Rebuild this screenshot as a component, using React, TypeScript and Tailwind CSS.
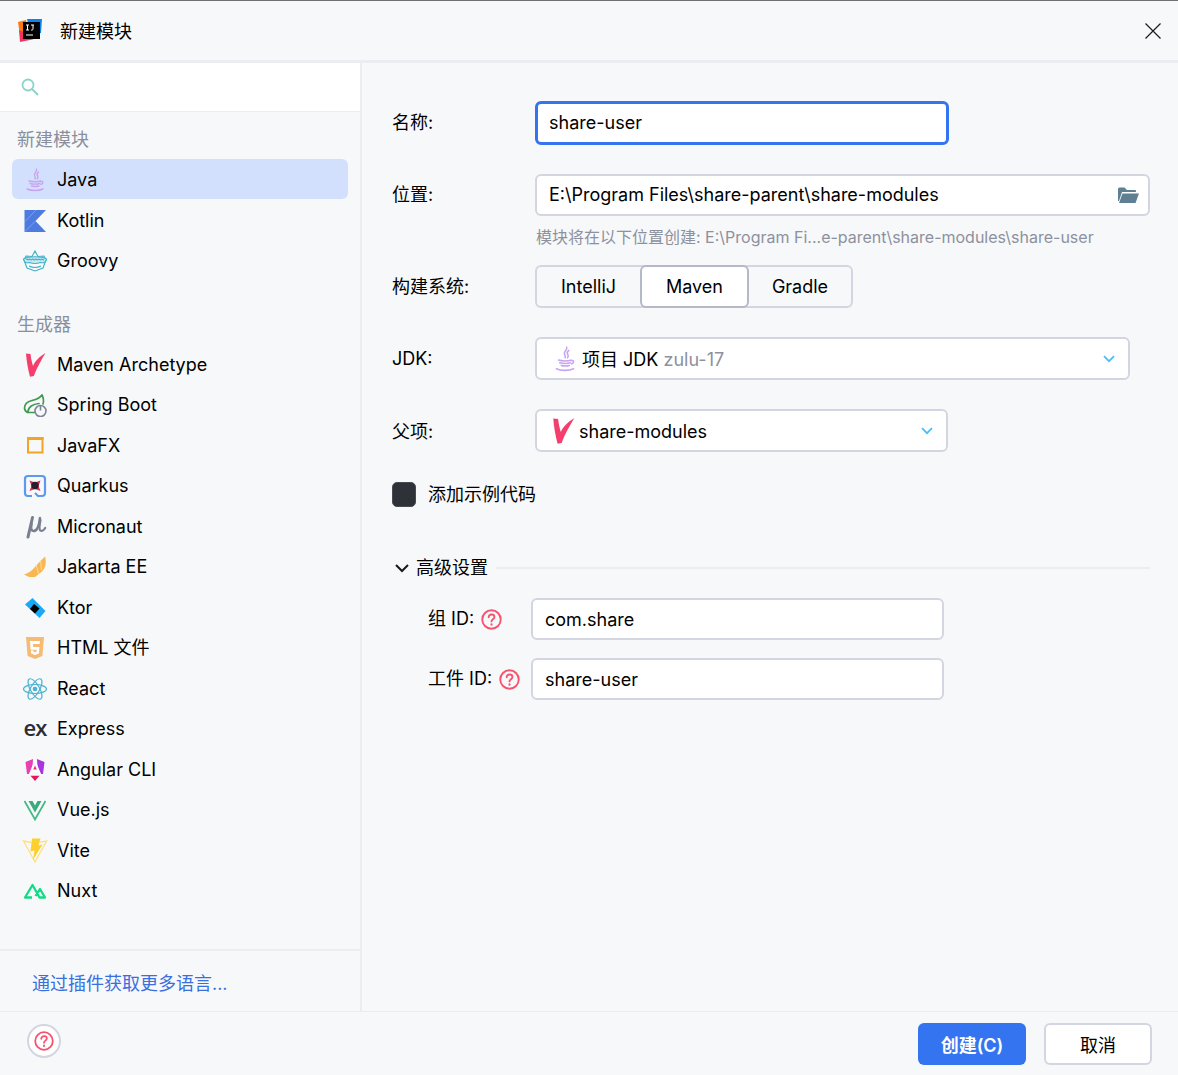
import type {ReactNode} from 'react'

const JavaIcon = ({size = 24}: {size?: number}) => (
  <svg width={size} height={size} viewBox="0 0 24 24" fill="none" stroke="#c9a2f2" strokeWidth="1.4" strokeLinecap="round">
    <path d="M13.500 1c1.500 2.500-3.500 4-1.800 7 .6 1 1 1.800.4 3" />
    <path d="M15.500 4c-2 1.500-1.600 3-.8 4.200.5.8.3 1.800-.4 2.600" />
    <path d="M6 13c3 1 9 1 11.500 0M7 15.500c3 .8 7 .8 10 0M8.500 18c2.500.6 5 .6 7.500 0" />
    <path d="M17.500 13.500c2.500-.8 3.500 1.800.5 3" />
    <path d="M4 21c4 2 12 2 16 0" />
  </svg>
)

const MavenIcon = ({size = 24}: {size?: number}) => (
  <svg width={size} height={size} viewBox="0 0 24 24">
    <path d="M3 .5L7.500 1C8 6 9 9.500 10 13 12 8 16 4 22.500 0 19 6 14 14 10.800 23L7 23.800C5 16 3.500 8 3 .5z" fill="#f43f6e" />
  </svg>
)

const KotlinIcon = () => (
  <svg width="24" height="24" viewBox="0 0 24 24">
    <path d="M1.500 1h21.500L12.500 12 23 23H1.500z" fill="#4d7be0" />
    <path d="M1.500 13L13 1M1.500 23l11-11" stroke="#9db8ee" strokeWidth="0.6" />
  </svg>
)

const GroovyIcon = () => (
  <svg width="26" height="24" viewBox="0 0 26 24" fill="none" stroke="#3fb0c6" strokeWidth="1.100">
    <path d="M13 2l3 5.500 6-.5 2 4-3 8-8 3-8-3-3-8 2-4 6 .5z" />
    <path d="M1.500 10c5-3 18-3 23 0-1 4-3 4-6 3.500-4 1.500-7 1.500-11 0-3 .5-5 .5-6-3.500z" fill="#c6e9f0" />
    <path d="M4 10.500c1-1.500 2 1.500 3 0s2 1.500 3 0 2 1.500 3 0 2 1.500 3 0 2 1.500 3 0 2 1.500 3 0" strokeWidth="1.200" />
    <path d="M7 17c4 2 8 2 12 0" />
  </svg>
)

const SpringIcon = () => (
  <svg width="24" height="24" viewBox="0 0 24 24" fill="none">
    <path d="M19 2c-2 3-6 4.500-10 5.500C5 8.500 1.500 11 1.500 15c0 2 1.200 3.500 3 4.500h8M5 19c0-5 5-8 11-8.500M19 2c1.500 3 2 6 1 9" stroke="#3d9a50" strokeWidth="1.700" strokeLinecap="round" />
    <circle cx="17.500" cy="18" r="5.500" fill="#f7f8fa" stroke="#7e8493" strokeWidth="1.600" />
    <path d="M17.500 12.500v5" stroke="#7e8493" strokeWidth="1.600" />
  </svg>
)

const JavaFxIcon = () => (
  <svg width="24" height="24" viewBox="0 0 24 24" fill="none">
    <path d="M5 4h14.500v14.500H5z" stroke="#f4a425" strokeWidth="2" />
    <path d="M4 4.500h16.500" stroke="#f4a425" strokeWidth="3" />
  </svg>
)

const QuarkusIcon = () => (
  <svg width="24" height="24" viewBox="0 0 24 24" fill="none">
    <path d="M9 22H5a3 3 0 0 1-3-3V5a3 3 0 0 1 3-3h14a3 3 0 0 1 3 3v14a3 3 0 0 1-3 3h-4l-3-3" stroke="#5a9bf0" strokeWidth="2.200" />
    <path d="M6.500 6.500l5.500 2 5.500-2-2 5.500 2 5-5.500-2-5.500 2 2-5z" fill="#e8265e" />
    <circle cx="12" cy="11.500" r="3.700" fill="#20232a" />
  </svg>
)

const MicronautIcon = () => (
  <svg width="24" height="24" viewBox="0 0 24 24" fill="none" stroke="#7a7f8f" strokeLinecap="round">
    <path d="M9.500 2.500L5 22" strokeWidth="3" />
    <path d="M8.500 9c-1 5 0 7 2 7 3 0 5.500-4 6.500-13" strokeWidth="2.500" />
    <path d="M17.500 5c-1 5-1.800 9-.3 10.500 1.500 1.200 3.500 0 5-2.500" strokeWidth="2.200" />
  </svg>
)

const JakartaIcon = () => (
  <svg width="24" height="24" viewBox="0 0 24 24">
    <path d="M1 19.500c6-1.500 10-6 14-11l7-7c1.500 5 1 11-3 15l-7 5.500-6 0z" fill="#f9b84f" />
    <path d="M13 9.500l2.500 9M17.500 5l1 10" stroke="#fde3b5" strokeWidth="0.800" />
  </svg>
)

const KtorIcon = () => (
  <svg width="24" height="24" viewBox="0 0 24 24">
    <path d="M9.500 2L22.500 15l-6 7L2 8.500z" fill="#1aa9f5" />
    <path d="M11 8l5.500 4.500-4.500 5-5-4.500z" fill="#000" />
  </svg>
)

const HtmlIcon = () => (
  <svg width="24" height="24" viewBox="0 0 24 24">
    <path d="M3 1h18l-1.600 19L12 23l-7.400-3z" fill="#f5bb75" />
    <path d="M7 5h10l-.3 3H10l.2 3h6.300l-.6 6.500L12 19l-3.900-1.500-.2-3h2.600l.1 1.200 1.400.5 1.500-.5.200-2H7.600z" fill="#fff" />
  </svg>
)

const ReactIcon = () => (
  <svg width="26" height="26" viewBox="-13 -13 26 26" fill="none" stroke="#4db2d2" strokeWidth="1.200">
    <ellipse rx="11.500" ry="4.500" />
    <ellipse rx="11.500" ry="4.500" transform="rotate(60)" />
    <ellipse rx="11.500" ry="4.500" transform="rotate(120)" />
    <circle r="2.300" fill="#4db2d2" stroke="none" />
  </svg>
)

const ExpressIcon = () => (
  <span className="w-6 text-center text-[22px] leading-none font-semibold tracking-[-1px] text-[#2c2d33] [font-family:'Open_Sans',sans-serif] -mt-1">ex</span>
)

const AngularIcon = () => (
  <svg width="24" height="24" viewBox="0 0 24 24">
    <path d="M10 1L2.500 4l1.500 12 5 0z" fill="#e83fb5" />
    <path d="M14 1l7.500 3-1.500 12h-5z" fill="#a935e0" />
    <path d="M12 1.500L5.500 17h3l1-2.800h5l1 2.800h3z" fill="#fff" />
    <path d="M12 7.500l1.700 4h-3.400z" fill="#e52a72" />
    <path d="M7.500 17.800h9L12 23z" fill="#e5155f" />
  </svg>
)

const VueIcon = () => (
  <svg width="24" height="24" viewBox="0 0 24 24">
    <path d="M1.500 3L12 21.500 22.500 3" fill="none" stroke="#42b883" strokeWidth="1.700" />
    <path d="M5.500 3h4L12 7.500 14.500 3h4L12 14.500z" fill="#3bab7b" />
  </svg>
)

const ViteIcon = () => (
  <svg width="26" height="26" viewBox="0 0 26 26">
    <path d="M9.500 4.500L1.500 3 13 24 24.500 3l-7 1.200" fill="none" stroke="#fbe27e" strokeWidth="1.300" />
    <path d="M10 .5h8.500l-2 7 4-1L11 22l1.500-9.500-4 1z" fill="#fdd02f" />
  </svg>
)

const NuxtIcon = () => (
  <svg width="24" height="24" viewBox="0 0 24 24" fill="none" stroke="#12dc86" strokeWidth="2.300" strokeLinejoin="round">
    <path d="M9 18.500H2L9.500 6l7 12.500h5.500L17 10l-4.500 7" />
  </svg>
)

const HelpIcon = ({size = 21}: {size?: number}) => (
  <svg width={size} height={size} viewBox="0 0 20 20" fill="none" stroke="#f7536e" strokeWidth="1.800" strokeLinecap="round">
    <circle cx="10" cy="10" r="8.800" />
    <path d="M7.300 7.800c0-1.600 1.200-2.600 2.800-2.600s2.700 1 2.700 2.300c0 2.100-2.800 2.200-2.800 4.300" />
    <path d="M10 14.600v.3" strokeWidth="2" />
  </svg>
)

const Chevron = () => (
  <svg width="12" height="8" viewBox="0 0 12 8" fill="none" stroke="#4dbdf5" strokeWidth="1.800">
    <path d="M1 1.200l5 5 5-5" />
  </svg>
)

const Row = ({icon, children, active, className = 'h-[40.5px]'}: {icon: ReactNode; children: ReactNode; active?: boolean; className?: string}) => (
  <div className={`mx-3 flex items-center rounded-md pl-[10px] ${className} ${active ? 'bg-[#d3e0fd]' : ''}`}>
    <span className="flex w-[26px] shrink-0 items-center justify-center">{icon}</span>
    <span className="ml-[9px]">{children}</span>
  </div>
)

const generators: [ReactNode, string][] = [
  [<MavenIcon />, 'Maven Archetype'],
  [<SpringIcon />, 'Spring Boot'],
  [<JavaFxIcon />, 'JavaFX'],
  [<QuarkusIcon />, 'Quarkus'],
  [<MicronautIcon />, 'Micronaut'],
  [<JakartaIcon />, 'Jakarta EE'],
  [<KtorIcon />, 'Ktor'],
  [<HtmlIcon />, 'HTML 文件'],
  [<ReactIcon />, 'React'],
  [<ExpressIcon />, 'Express'],
  [<AngularIcon />, 'Angular CLI'],
  [<VueIcon />, 'Vue.js'],
  [<ViteIcon />, 'Vite'],
  [<NuxtIcon />, 'Nuxt']
]

const boxClass = 'flex h-[42px] items-center rounded-md border-2 border-[#d3d6e0] bg-white'

export default function App() {
  return (
    <div className="flex h-[1075px] w-[1178px] flex-col overflow-hidden border-t border-[#6f7072] bg-[#f7f8fa] text-lg leading-none text-black [font-family:Inter,'Noto_Sans_CJK_SC',sans-serif]">
      <header className="flex h-[62px] shrink-0 items-center border-b-[3px] border-[#ebedf0] pl-[18px] pr-4">
        <svg width="25" height="25" viewBox="0 0 25 25">
          <path d="M9 1h15l-1 14-10 2z" fill="#0a84f5" />
          <path d="M0 4l8-2 3 12-9 3z" fill="#f97a12" />
          <path d="M1 12l12 5 9-3-2 6-8 2-10 2z" fill="#f5325f" />
          <path d="M5 4h17v17H5z" fill="#000" />
          <path d="M8 7h3M9.500 7v5M8 12h3M13 7h3M15 7v4c0 1-1 1.200-2 1M8 17h7" stroke="#fff" strokeWidth="1" fill="none" />
        </svg>
        <span className="ml-[17px] pt-[2px]">新建模块</span>
        <svg className="ml-auto" width="18" height="18" viewBox="0 0 18 18" stroke="#1a1a1a" strokeWidth="1.200">
          <path d="M1.500 1.500l15 15M16.500 1.500l-15 15" />
        </svg>
      </header>

      <div className="flex min-h-0 flex-1">
        <aside className="flex w-[362px] shrink-0 flex-col border-r-2 border-[#ebedf0]">
          <div className="flex h-[49px] shrink-0 items-center border-b border-[#ebedf0] bg-white pl-[21px]">
            <svg width="18" height="18" viewBox="0 0 18 18" fill="none" stroke="#8dd3ca" strokeWidth="1.800" strokeLinecap="round">
              <circle cx="7" cy="7" r="5.500" />
              <path d="M11 11l5.500 5.500" />
            </svg>
          </div>
          <div className="flex h-[47px] shrink-0 items-center pl-[17px] pt-[9px] text-[#8b8f9b]">新建模块</div>
          <Row icon={<JavaIcon />} active className="h-10 pt-[2px]">Java</Row>
          <Row icon={<KotlinIcon />} className="mt-px h-10 pt-[2px]">Kotlin</Row>
          <Row icon={<GroovyIcon />} className="h-10 pt-[2px]">Groovy</Row>
          <div className="flex h-[64.5px] shrink-0 items-end pb-[11px] pl-[17px] text-[#8b8f9b]">生成器</div>
          {generators.map(([icon, name]) => (
            <Row key={name} icon={icon}>{name}</Row>
          ))}
          <div className="mt-auto flex h-[62px] shrink-0 items-center border-t-2 border-[#ebedf0] pl-[32px] pt-[5px] text-[#3a6fe0]">
            通过插件获取更多语言...
          </div>
        </aside>

        <main className="min-w-0 flex-1 pl-[30px] pr-[28px] pt-[38px]">
          <div className="flex items-center">
            <span className="w-[143px] shrink-0">名称:</span>
            <div className="flex h-[44px] w-[414px] items-center rounded-md border-[3px] border-[#3574f0] bg-white pl-[11px]">share-user</div>
          </div>
          <div className="mt-[29px] flex items-center">
            <span className="w-[143px] shrink-0">位置:</span>
            <div className={`${boxClass} flex-1 pl-[12px] pr-[9px]`}>
              <span>E:\Program Files\share-parent\share-modules</span>
              <svg className="ml-auto" width="22" height="18" viewBox="0 0 22 18" fill="#5f7f92">
                <path d="M1 3a1.500 1.500 0 0 1 1.500-1.500h5L10 4h8a1 1 0 0 1 1 1v1H5L2 15H1z" />
                <path d="M5.500 7.500H22l-3.500 9.500H2z" />
              </svg>
            </div>
          </div>
          <div className="mt-[13px] ml-[144px] text-base leading-none whitespace-nowrap text-[#8d919d]">
            模块将在以下位置创建: E:\Program Fi...e-parent\share-modules\share-user
          </div>
          <div className="mt-[20px] flex items-center">
            <span className="w-[143px] shrink-0">构建系统:</span>
            <div className="flex h-[43px] w-[318px] items-stretch rounded-md border-2 border-[#d3d6e0]">
              <span className="flex w-[103px] items-center justify-center">IntelliJ</span>
              <span className="-my-[2px] flex w-[109px] items-center justify-center rounded-md border-2 border-[#b5b8c6] bg-white">Maven</span>
              <span className="flex flex-1 items-center justify-center">Gradle</span>
            </div>
          </div>
          <div className="mt-[29px] flex items-center">
            <span className="w-[143px] shrink-0">JDK:</span>
            <div className={`${boxClass} h-[43px] w-[595px] pl-[15px] pr-[13px]`}>
              <JavaIcon size={26} />
              <span className="ml-[4px] pt-[3px]">项目 JDK <span className="text-[#8d919d]">zulu-17</span></span>
              <span className="ml-auto flex"><Chevron /></span>
            </div>
          </div>
          <div className="mt-[29px] flex items-center">
            <span className="w-[143px] shrink-0 pt-[2px]">父项:</span>
            <div className={`${boxClass} h-[43px] w-[413px] pl-[13px] pr-[13px]`}>
              <MavenIcon size={26} />
              <span className="ml-[3px] pt-[3px]">share-modules</span>
              <span className="ml-auto flex"><Chevron /></span>
            </div>
          </div>
          <div className="mt-[30px] flex items-center">
            <span className="h-[25px] w-[24px] shrink-0 rounded-[5px] border border-[#474a52] bg-[#2f3138]" />
            <span className="ml-3">添加示例代码</span>
          </div>
          <div className="mt-[52px] flex items-center">
            <svg className="ml-[3px]" width="14" height="9" viewBox="0 0 14 9" fill="none" stroke="#1a1a1a" strokeWidth="2">
              <path d="M1 1l6 6 6-6" />
            </svg>
            <span className="ml-[7px]">高级设置</span>
            <span className="ml-2 h-[2px] flex-1 bg-[#ebedf0]" />
          </div>
          <div className="mt-[21px] flex items-center pl-9">
            <span className="flex w-[103px] shrink-0 items-center">组 ID:<span className="ml-[7px] flex"><HelpIcon /></span></span>
            <div className={`${boxClass} w-[413px] pl-[12px] pt-[2px]`}>com.share</div>
          </div>
          <div className="mt-[18px] flex items-center pl-9">
            <span className="flex w-[103px] shrink-0 items-center">工件 ID:<span className="ml-[7px] flex"><HelpIcon /></span></span>
            <div className={`${boxClass} w-[413px] pl-[12px] pt-[2px]`}>share-user</div>
          </div>
        </main>
      </div>

      <footer className="flex h-[64px] shrink-0 items-start border-t border-[#ebedf0] pl-[27px] pr-[26px]">
        <span className="mt-[12px] flex size-[34px] items-center justify-center rounded-full border-2 border-[#d3d6e0] bg-white">
          <HelpIcon size={20} />
        </span>
        <button className="ml-auto mt-[11px] h-[42px] w-[108px] rounded-md bg-[#3574f0] pt-[3px] font-semibold text-white">创建(C)</button>
        <button className="ml-[18px] mt-[11px] h-[42px] w-[108px] rounded-md border-2 border-[#d3d6e0] bg-white pt-[3px]">取消</button>
      </footer>
    </div>
  )
}
